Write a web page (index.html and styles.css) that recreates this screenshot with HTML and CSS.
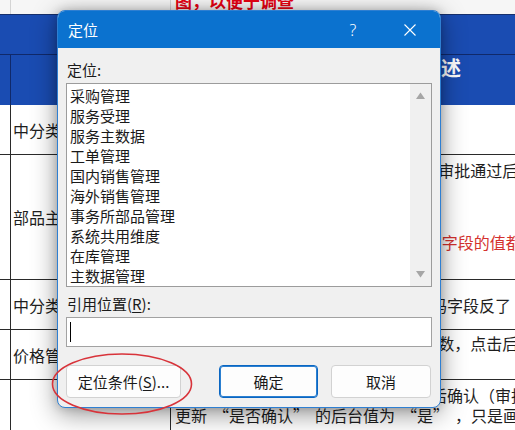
FILE: index.html
```html
<!DOCTYPE html>
<html lang="zh-CN">
<head>
<meta charset="utf-8">
<title>定位</title>
<link rel="stylesheet" href="styles.css">
</head>
<body>
<div class="sheet">
  <div class="row top">
    <div class="c0"></div><div class="c1"></div>
    <div class="c2"><span class="note">图，以便于调查</span></div>
  </div>
  <div class="hdr">
    <div class="hdr1"></div>
    <div class="row hdr2">
      <div class="c0"></div><div class="c1"></div>
      <div class="c2"><span class="htext">描述</span></div>
    </div>
  </div>
  <div class="row r1">
    <div class="c0"></div><div class="c1 mid">中分类编码</div><div class="c2"></div>
  </div>
  <div class="row r2">
    <div class="c0"></div><div class="c1 mid">部品主数据</div>
    <div class="c2 lines24">
      <div>部品主数据 新增或变更后 需提交主管审批通过后才会生效</div>
      <div>各系统同步数据。</div>
      <div>同步失败时重试。</div>
      <div class="red">在一览画面 确认所有 数据时，请检查 字段的值都正确</div>
    </div>
  </div>
  <div class="row r3">
    <div class="c0"></div><div class="c1 mid">中分类名称</div>
    <div class="c2 mid">在画面显示的中分类名称与中分类编码字段反了</div>
  </div>
  <div class="row r4">
    <div class="c0"></div><div class="c1 mid">价格管理</div>
    <div class="c2 lines24">
      <div>价格管理 画面中修改价格时的 小数位数，点击后无反应</div>
      <div>需要修正。</div>
    </div>
  </div>
  <div class="row r5">
    <div class="c0"></div><div class="c1"></div>
    <div class="c2 lines20">
      <div>用户在一览画面勾选数据并点击提交后确认（审批）时</div>
      <div>更新<span class="ql">“</span>是否确认<span class="qr">”</span>的后台值为<span class="ql">“</span>是<span class="qr">”</span>，只是画面未刷新</div>
    </div>
  </div>
</div>

<div class="dialog">
  <div class="titlebar">
    <span class="title">定位</span>
    <span class="help">?</span>
    <span class="close"><svg width="12" height="12" viewBox="0 0 12 12"><path d="M0.5 0.5L11.5 11.5M11.5 0.5L0.5 11.5" stroke="#ffffff" stroke-width="1.1" fill="none"/></svg></span>
  </div>
  <div class="body">
    <div class="label">定位:</div>
    <div class="listbox">
      <div class="items">
        <div>采购管理</div>
        <div>服务受理</div>
        <div>服务主数据</div>
        <div>工单管理</div>
        <div>国内销售管理</div>
        <div>海外销售管理</div>
        <div>事务所部品管理</div>
        <div>系统共用维度</div>
        <div>在库管理</div>
        <div>主数据管理</div>
      </div>
      <div class="scroll">
        <svg width="9" height="7" viewBox="0 0 9 7"><path d="M4.5 0.5L9 7H0Z" fill="#a6a6a6"/></svg>
        <svg width="9" height="7" viewBox="0 0 9 7"><path d="M0 0H9L4.5 6.5Z" fill="#a6a6a6"/></svg>
      </div>
    </div>
    <div class="label label2">引用位置(<u>R</u>):</div>
    <div class="input"><span class="caret"></span></div>
    <div class="buttons">
      <button class="btn btn-cond">定位条件(<u>S</u>)...</button>
      <div class="rbtns">
        <button class="btn btn-ok">确定</button>
        <button class="btn btn-cancel">取消</button>
      </div>
    </div>
  </div>
</div>

<svg class="mark" width="146" height="68" viewBox="0 0 146 68">
  <ellipse cx="72" cy="33" rx="69.5" ry="30" fill="none" stroke="#d8333a" stroke-width="1.6"/>
</svg>
</body>
</html>
```

FILE: styles.css
```css
* { box-sizing: border-box; }

body {
  margin: 0;
  width: 515px;
  height: 430px;
  overflow: hidden;
  position: relative;
  background: #ffffff;
  font-family: "Noto Sans CJK SC", "Noto Sans", sans-serif;
  color: #1e1e1e;
}

/* ---------- spreadsheet ---------- */
.sheet {
  display: flex;
  flex-direction: column;
}

.row {
  display: grid;
  grid-template-columns: 11px 160px 1fr;
  border-bottom: 1px solid #2a2a2a;
  font-size: 16px;
}

.c0 { border-right: 1px solid #2a2a2a; }
.c1 {
  border-right: 1px solid #2a2a2a;
  overflow: hidden;
  white-space: nowrap;
  padding-left: 2px;
}
.c2 {
  overflow: hidden;
  white-space: nowrap;
  padding-left: 4px;
}
.mid {
  display: flex;
  align-items: center;
  line-height: 24px;
}

.top {
  height: 14px;
  background: #f6f6f6;
  border-bottom: none;
}
.top .c0, .top .c1 { border-right-color: #d4d4d4; }
.note {
  display: block;
  margin-top: -9px;
  font-size: 17px;
  line-height: 20px;
  font-weight: 700;
  color: #e60012;
}

.hdr {
  background: #1a4cb2;
  border-top: 1px solid #17306c;
}
.hdr1 {
  height: 40px;
  border-bottom: 1px solid #10296a;
}
.hdr2 {
  height: 50px;
  border-bottom: none;
}
.hdr2 .c0 { border-right-color: #10296a; }
.hdr2 .c1 { border-right-color: #10296a; }
.htext {
  display: block;
  padding-left: 246px;
  padding-top: 1px;
  font-size: 20px;
  line-height: 24px;
  font-weight: 700;
  color: #ffffff;
}

.r1 { height: 50px; }
.r2 { height: 125px; }
.r3 { height: 50px; }
.r4 { height: 50px; }
.r5 { height: 60px; border-bottom: none; }

.lines24 {
  line-height: 24px;
  padding-top: 3px;
}
.r4 .lines24 { padding-top: 1px; }
.lines20 {
  line-height: 20px;
  padding-top: 5px;
}
.red { color: #d4312e; }
.ql, .qr {
  display: inline-block;
  width: 22px;
}
.ql { text-align: right; }
.qr { text-align: left; }

/* ---------- dialog ---------- */
.dialog {
  position: absolute;
  left: 57px;
  top: 10px;
  width: 384px;
  height: 398px;
  border: 1px solid #2e7fd2;
  border-radius: 8px;
  background: #f0f0f0;
  overflow: hidden;
  box-shadow: 0 6px 26px rgba(0, 0, 0, 0.42), 0 0 10px rgba(0, 0, 0, 0.18);
  display: flex;
  flex-direction: column;
  font-size: 15px;
  color: #1a1a1a;
}

.titlebar {
  height: 37px;
  flex: none;
  background: #0b72cf;
  color: #ffffff;
  display: flex;
  align-items: center;
  padding-left: 10px;
  padding-right: 7px;
}
.title {
  flex: 1;
  font-size: 15px;
  line-height: 20px;
}
.help {
  width: 46px;
  text-align: center;
  font-family: "Noto Sans", sans-serif;
  font-weight: 300;
  font-size: 16px;
  line-height: 20px;
}
.close {
  width: 46px;
  margin-left: 11px;
  display: flex;
  justify-content: center;
  align-items: center;
}
.close svg { display: block; }

.body {
  flex: 1;
  display: flex;
  flex-direction: column;
  padding: 0 8px 0 8px;
}

.label {
  margin-top: 12px;
  padding-left: 1px;
  line-height: 20px;
  height: 20px;
}
.label2 { margin-top: 7px; }
.label u { text-underline-offset: 2px; }

.listbox {
  margin-top: 3px;
  height: 204px;
  background: #ffffff;
  border: 1px solid #9c9c9c;
  display: flex;
}
.items {
  flex: 1;
  padding: 2px 0 0 3px;
  line-height: 20px;
  white-space: nowrap;
  overflow: hidden;
}
.scroll {
  width: 21px;
  background: #f0f0f0;
  display: flex;
  flex-direction: column;
  justify-content: space-between;
  align-items: center;
  padding: 8px 0 8px 0;
}
.scroll svg { display: block; }

.input {
  margin-top: 3px;
  height: 30px;
  background: #ffffff;
  border: 1px solid #a2a2a2;
  display: flex;
  align-items: center;
}
.caret {
  display: block;
  width: 1px;
  height: 20px;
  margin-left: 3px;
  background: #000000;
}

.buttons {
  margin-top: 18px;
  display: flex;
  align-items: center;
}
.rbtns {
  margin-left: auto;
  margin-right: 1px;
  display: flex;
  gap: 13px;
}
.btn {
  height: 33px;
  padding: 0;
  border: 1px solid #d2d2d2;
  border-radius: 4px;
  background: #fdfdfd;
  font-family: "Noto Sans CJK SC", "Noto Sans", sans-serif;
  font-size: 15px;
  color: #1a1a1a;
  line-height: 20px;
}
.btn u { text-underline-offset: 2px; }
.btn-cond { width: 115px; }
.btn-ok {
  width: 99px;
  border: 1px solid #0a66c2;
  box-shadow: inset 0 0 0 1px #2b7fd0;
}
.btn-cancel { width: 100px; }

/* ---------- red annotation ---------- */
.mark {
  position: absolute;
  left: 50px;
  top: 351px;
}
```
